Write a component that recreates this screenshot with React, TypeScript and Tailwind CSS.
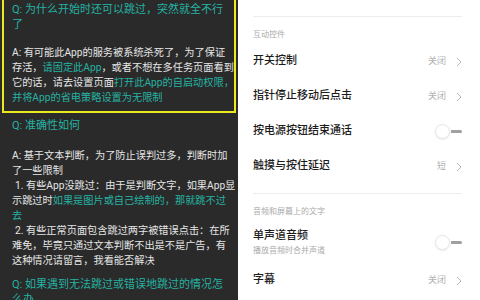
import React from "react";

const teal = "text-[#25b3a3]";

type Seg = { t: string; hl?: boolean };

// one visual line of the FAQ text, with optional highlighted parts
const Line = ({ segs, className = "" }: { segs: Seg[]; className?: string }) => (
  <div className={`whitespace-nowrap ${className}`}>
    {segs.map((s, i) => (
      <span key={i} className={s.hl ? teal : ""}>
        {s.t}
      </span>
    ))}
  </div>
);

const Chevron = () => (
  <svg width="6" height="10" viewBox="0 0 6 10" className="ml-[10px]">
    <polyline points="1,1 5,5 1,9" fill="none" stroke="#b8b8b8" strokeWidth="1" />
  </svg>
);

const Toggle = () => (
  <div className="flex items-center">
    <div className="w-[15px] h-[15px] rounded-full bg-white border border-[#e6e6e6] shadow-[0_1px_2px_rgba(0,0,0,0.08)]" />
    <div className="w-[11px] h-[3px] ml-px bg-[#a0a0a0] rounded-r-sm" />
  </div>
);

const Row = ({ title, value, toggle }: { title: string; value?: string; toggle?: boolean }) => (
  <div className="h-[35px] flex items-center justify-between">
    <span className="text-[11px] font-medium text-[#1c1c1c]">{title}</span>
    {toggle ? (
      <Toggle />
    ) : (
      <div className="flex items-center">
        <span className="text-[9px] text-[#b0b0b0]">{value}</span>
        <Chevron />
      </div>
    )}
  </div>
);

export default function App() {
  return (
    <div
      className="w-[480px] h-[300px] flex overflow-hidden"
      style={{ fontFamily: "Roboto, 'Noto Sans CJK SC', sans-serif" }}
    >
      {/* FAQ panel */}
      <div className="w-[238px] h-full bg-[#2a2a2a] text-[#e6e6e6] text-[10.2px] leading-[15px] pl-[2px]">
        <div className="w-[234px] border-2 border-t-0 border-[#e9e91c] pl-[8px] pt-[2px] pb-[6px]">
          <div className={`text-[11px] leading-[15px] ${teal}`}>
            <Line segs={[{ t: "Q: 为什么开始时还可以跳过，突然就全不行" }]} />
            <Line segs={[{ t: "了" }]} />
          </div>
          <div className="mt-[13px]">
            <Line segs={[{ t: "A: 有可能此App的服务被系统杀死了，为了保证" }]} />
            <Line segs={[{ t: "存活，" }, { t: "请固定此App", hl: true }, { t: "，或者不想在多任务页面看到" }]} />
            <Line segs={[{ t: "它的话，请去设置页面" }, { t: "打开此App的自启动权限，", hl: true }]} />
            <Line segs={[{ t: "并将App的省电策略设置为无限制", hl: true }]} />
          </div>
        </div>
        <div className="pl-[10px]">
          <div className={`mt-[5px] text-[11px] ${teal}`}>Q: 准确性如何</div>
          <div className="mt-[15px]">
            <Line segs={[{ t: "A: 基于文本判断，为了防止误判过多，判断时加" }]} />
            <Line segs={[{ t: "了一些限制" }]} />
            <Line className="pl-[3px]" segs={[{ t: "1. 有些App没跳过：由于是判断文字，如果App显" }]} />
            <Line segs={[{ t: "示跳过时" }, { t: "如果是图片或自己绘制的，那就跳不过", hl: true }]} />
            <Line segs={[{ t: "去", hl: true }]} />
            <Line className="pl-[3px]" segs={[{ t: "2. 有些正常页面包含跳过两字被错误点击：在所" }]} />
            <Line segs={[{ t: "难免，毕竟只通过文本判断不出是不是广告，有" }]} />
            <Line segs={[{ t: "这种情况请留言，我看能否解决" }]} />
          </div>
          <div className={`mt-[9px] text-[11px] ${teal}`}>
            <Line segs={[{ t: "Q: 如果遇到无法跳过或错误地跳过的情况怎" }]} />
            <Line segs={[{ t: "么办" }]} />
          </div>
        </div>
      </div>

      {/* settings panel */}
      <div className="flex-1 h-full bg-white pl-[15px] pr-[18px] pt-[16px]">
        <div className="h-px bg-[#ededed]" />
        <div className="mt-[12px] text-[8px] leading-[12px] text-[#ababab]">互动控件</div>
        <div className="mt-[3px]">
          <Row title="开关控制" value="关闭" />
          <Row title="指针停止移动后点击" value="关闭" />
          <Row title="按电源按钮结束通话" toggle />
          <Row title="触摸与按住延迟" value="短" />
        </div>
        <div className="mt-[9px] h-px bg-[#ededed]" />
        <div className="mt-[12px] text-[8px] leading-[12px] text-[#ababab]">音频和屏幕上的文字</div>
        <div className="mt-[10px] flex items-center justify-between">
          <div>
            <div className="text-[11px] leading-[15px] font-medium text-[#1c1c1c]">单声道音频</div>
            <div className="mt-[2px] text-[8px] leading-[11px] text-[#ababab]">播放音频时合并声道</div>
          </div>
          <Toggle />
        </div>
        <div className="mt-[7px]">
          <Row title="字幕" value="关闭" />
        </div>
      </div>
    </div>
  );
}
